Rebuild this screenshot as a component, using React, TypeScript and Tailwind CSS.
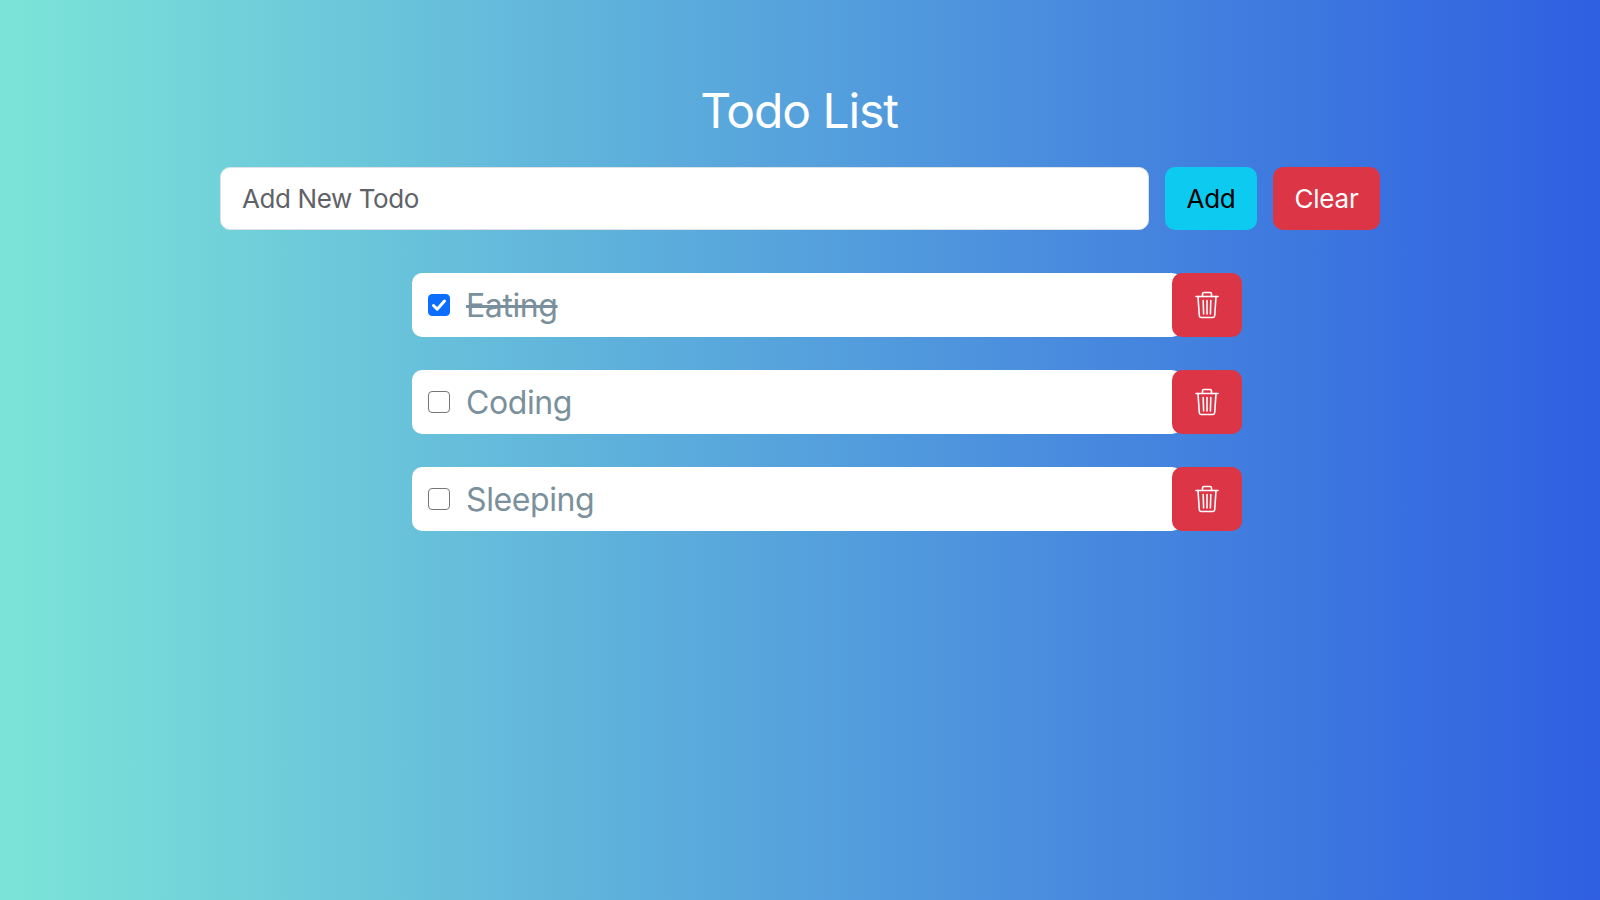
import { useState } from 'react'

const TODOS = [
  { id: 1, title: 'Eating', done: true },
  { id: 2, title: 'Coding', done: false },
  { id: 3, title: 'Sleeping', done: false },
]

function TrashIcon() {
  return (
    <svg width="24" height="28" viewBox="0 0 24 28" fill="none" stroke="white" strokeWidth="1.6" strokeLinecap="round" strokeLinejoin="round">
      <path d="M1 5.500h22" />
      <path d="M7.500 5.500V3a1.500 1.500 0 0 1 1.500-1.500h6A1.500 1.500 0 0 1 16.500 3v2.500" />
      <path d="M3 5.500l1.300 19.300a1.800 1.800 0 0 0 1.800 1.700h11.800a1.800 1.800 0 0 0 1.800-1.700L21 5.500" />
      <path d="M8.200 9.500l.4 13.500M12 9.500V23M15.800 9.500l-.4 13.500" />
    </svg>
  )
}

export default function App() {
  const [todos, setTodos] = useState(TODOS)

  const toggle = (id: number) => {
    setTodos((prev) => prev.map((t) => (t.id === id ? { ...t, done: !t.done } : t)))
  }

  return (
    <div className="min-h-[900px] bg-linear-to-r/srgb from-[#7ce4d8] to-[#2f5fe1] font-['Inter',sans-serif]">
      <div className="w-[1160px] mx-auto pt-[82px]">
        <h1 className="text-center text-[48px] leading-[58px] tracking-[-1.1px] pr-[2px] text-white">Todo List</h1>

        <div className="flex gap-[16px] mt-[27px]">
          <input
            placeholder="Add New Todo"
            className="w-[929px] h-[63px] px-[21px] bg-white border border-[#dee2e6] rounded-[10px] text-[26px] tracking-[-0.4px] placeholder:text-[#5f6368] outline-none"
          />
          <button className="w-[92px] h-[63px] bg-[#0dcaf0] rounded-[10px] text-[26px] tracking-[-0.2px] text-black">Add</button>
          <button className="w-[107px] h-[63px] bg-[#dc3545] rounded-[10px] text-[26px] tracking-[-0.2px] text-white">Clear</button>
        </div>

        <ul className="flex flex-col gap-[33.500px] mt-[43px] pl-[192px]">
          {todos.map((todo) => (
            <li key={todo.id} className="flex w-[830px] h-[63.500px]">
              <label className="flex flex-1 items-center bg-white rounded-[10px] pl-[16px] -mr-[10px]">
                <span className="relative flex w-[22px] h-[22px]">
                  <input
                    type="checkbox"
                    checked={todo.done}
                    onChange={() => toggle(todo.id)}
                    className="appearance-none w-[22px] h-[22px] rounded-[4px] border-[1.500px] border-[#767676] bg-white checked:bg-[#0d6efd] checked:border-[#0d6efd]"
                  />
                  {todo.done && (
                    <svg className="absolute inset-0 pointer-events-none" width="22" height="22" viewBox="0 0 22 22" fill="none" stroke="white" strokeWidth="3" strokeLinecap="round" strokeLinejoin="round">
                      <path d="M5.500 11.500l3.700 3.700 7.300-8.200" />
                    </svg>
                  )}
                </span>
                <span className={`ml-[16px] mt-[3px] text-[32px] tracking-[-0.4px] text-[#7a909c] ${todo.done ? 'line-through' : ''}`}>{todo.title}</span>
              </label>
              <button className="relative w-[70px] h-[63.500px] flex items-center justify-center bg-[#dc3545] rounded-[10px]">
                <TrashIcon />
              </button>
            </li>
          ))}
        </ul>
      </div>
    </div>
  )
}
